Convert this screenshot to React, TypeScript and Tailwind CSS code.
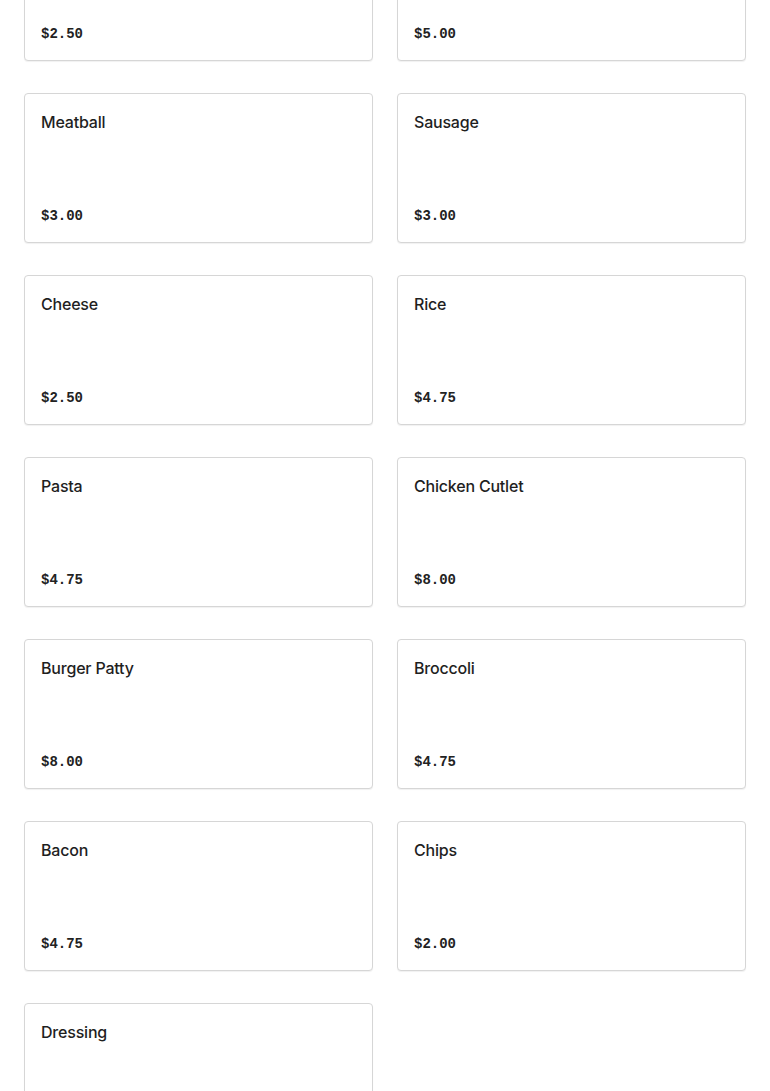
import React from "react";

const items: { name: string; price: string }[] = [
  { name: "Chicken", price: "$2.50" },
  { name: "Steak", price: "$5.00" },
  { name: "Meatball", price: "$3.00" },
  { name: "Sausage", price: "$3.00" },
  { name: "Cheese", price: "$2.50" },
  { name: "Rice", price: "$4.75" },
  { name: "Pasta", price: "$4.75" },
  { name: "Chicken Cutlet", price: "$8.00" },
  { name: "Burger Patty", price: "$8.00" },
  { name: "Broccoli", price: "$4.75" },
  { name: "Bacon", price: "$4.75" },
  { name: "Chips", price: "$2.00" },
  { name: "Dressing", price: "$2.00" },
];

export default function App() {
  return (
    <div className="min-h-screen bg-white overflow-hidden">
      <div className="grid grid-cols-2 gap-x-6 gap-y-8 px-6 mt-[-89px] pb-8">
        {items.map((it) => (
          <div
            key={it.name}
            className="h-[150px] flex flex-col justify-between p-4 border border-[#d6d6d6] rounded-[4px] bg-white shadow-[0_1px_1px_rgba(0,0,0,0.06)]"
          >
            <div className="text-[16px] leading-6 font-medium text-[#1f1f1f] font-['Inter',sans-serif] tracking-[-0.2px]">
              {it.name}
            </div>
            <div className="text-[14px] leading-[19px] font-bold text-[#222] font-['Liberation_Mono',monospace]">
              {it.price}
            </div>
          </div>
        ))}
      </div>
    </div>
  );
}
